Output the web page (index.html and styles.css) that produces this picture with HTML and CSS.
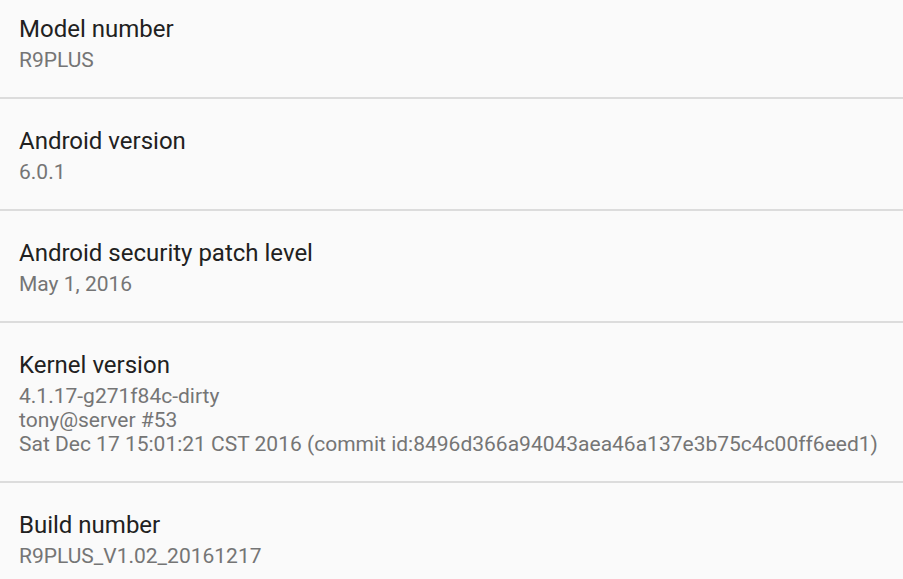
FILE: index.html
```html
<!DOCTYPE html>
<html lang="en">
<head>
    <meta charset="UTF-8">
    <meta name="viewport" content="width=device-width, initial-scale=1.0">
    <title>About phone</title>
    <link rel="stylesheet" href="styles.css">
</head>
<body>
    <div class="pref-list">
        <div class="pref-item">
            <div class="pref-title">Model number</div>
            <div class="pref-summary">R9PLUS</div>
        </div>
        <div class="pref-item">
            <div class="pref-title">Android version</div>
            <div class="pref-summary">6.0.1</div>
        </div>
        <div class="pref-item">
            <div class="pref-title">Android security patch level</div>
            <div class="pref-summary">May 1, 2016</div>
        </div>
        <div class="pref-item">
            <div class="pref-title">Kernel version</div>
            <div class="pref-summary">4.1.17-g271f84c-dirty<br>tony@server #53<br>Sat Dec 17 15:01:21 CST 2016 (commit id:8496d366a94043aea46a137e3b75c4c00ff6eed1)</div>
        </div>
        <div class="pref-item">
            <div class="pref-title">Build number</div>
            <div class="pref-summary">R9PLUS_V1.02_20161217</div>
        </div>
    </div>
</body>
</html>
```
FILE: styles.css
```css
body {
    margin: 0;
    background-color: #fafafa;
    font-family: 'Roboto', 'Noto Sans', sans-serif;
    overflow: hidden;
}

.pref-list {
    margin-top: -13px;
}

.pref-item {
    padding: 27.8px 19px 25.2px;
    border-bottom: 2px solid #dcdcdc;
}

.pref-title {
    font-size: 24px;
    line-height: 28px;
    color: #212121;
}

.pref-summary {
    margin-top: 5px;
    font-size: 21px;
    line-height: 24px;
    color: #757575;
    white-space: nowrap;
}
```
